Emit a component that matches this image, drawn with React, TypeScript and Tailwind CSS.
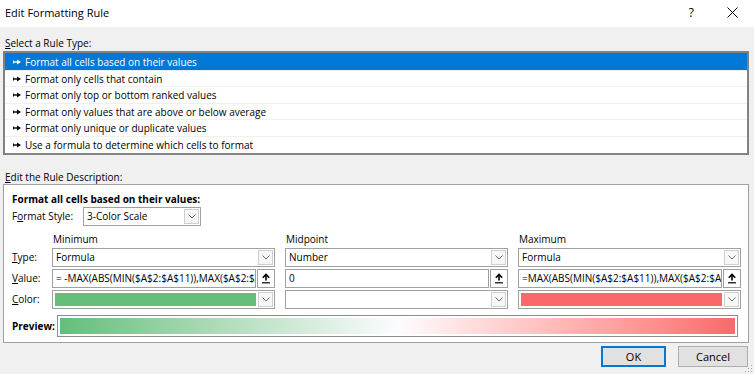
import React from "react";

const Chevron = () => (
  <div className="w-[15px] h-[15px] mr-[1px] border border-[#cfcfcf] bg-[#f7f7f7] flex items-center justify-center shrink-0">
    <svg width="8" height="5" viewBox="0 0 8 5">
      <polyline points="0.5,0.5 4,4 7.5,0.5" fill="none" stroke="#6d6d6d" strokeWidth="1" />
    </svg>
  </div>
);

const UpBtn = () => (
  <div className="w-[18px] h-[19px] border border-[#a0a0a0] bg-white flex items-center justify-center shrink-0">
    <svg width="10" height="11" viewBox="0 0 10 11">
      <path d="M5 1.5 V7.5" stroke="#000" strokeWidth="1.6" />
      <path d="M1.8 4.8 L5 1.5 L8.2 4.8" fill="none" stroke="#000" strokeWidth="1.6" />
      <path d="M1 9.8 H9" stroke="#000" strokeWidth="1.2" />
    </svg>
  </div>
);

const Combo = ({ text, fill }: { text?: string; fill?: string }) => (
  <div className="h-[19px] border border-[#a0a0a0] bg-white flex items-center">
    {fill ? (
      <div className="flex-1 h-[13px] mx-[2px]" style={{ backgroundColor: fill }} />
    ) : (
      <div className="flex-1 pl-[3px] leading-[17px] truncate">{text}</div>
    )}
    <Chevron />
  </div>
);

const ValueField = ({ text }: { text: string }) => (
  <div className="h-[19px] flex gap-[1px]">
    <div className="flex-1 min-w-0 border border-[#a0a0a0] bg-white pl-[3px] leading-[17px] whitespace-nowrap overflow-hidden">
      {text}
    </div>
    <UpBtn />
  </div>
);

const ListArrow = ({ white }: { white?: boolean }) => (
  <svg width="8" height="6" viewBox="0 0 8 6" className="shrink-0">
    <rect x="0" y="2.3" width="5" height="1.4" fill={white ? "#fff" : "#000"} />
    <rect x="0" y="1.5" width="1" height="3" fill={white ? "#fff" : "#000"} />
    <polygon points="4,0.5 8,3 4,5.5" fill={white ? "#fff" : "#000"} />
  </svg>
);

const rules = [
  { t: "Format all cells based on their values", h: "h-[17px]" },
  { t: "Format only cells that contain", h: "h-[16px]" },
  { t: "Format only top or bottom ranked values", h: "h-[17px]" },
  { t: "Format only values that are above or below average", h: "h-[16px]" },
  { t: "Format only unique or duplicate values", h: "h-[17px]" },
  { t: "Use a formula to determine which cells to format", h: "h-[17px]" },
];

export default function App() {
  return (
    <div className="relative w-[754px] h-[374px] bg-[#f0f0f0] text-black font-['Open_Sans','Segoe_UI',sans-serif] text-[10px] overflow-hidden">
      {/* Title bar */}
      <div className="h-[27px] bg-white flex items-center justify-between">
        <div className="pl-[5px] text-[11px] leading-[14px] pb-[2px]">Edit Formatting Rule</div>
        <div className="flex items-center pb-[2px]">
          <span className="text-[12px] leading-[14px] mr-[33px]">?</span>
          <svg width="11" height="11" viewBox="0 0 11 11" className="mr-[16px]">
            <path d="M0.5 0.5 L10.5 10.5 M10.5 0.5 L0.5 10.5" stroke="#000" strokeWidth="1" />
          </svg>
        </div>
      </div>

      <div className="pl-[3px] pr-[5px]">
        {/* Select a rule type */}
        <div className="h-[24px] pt-[9px] pl-[2px] leading-[14px]">
          <span className="underline">S</span>elect a Rule Type:
        </div>
        <div className="h-[104px] border-2 border-[#828282] bg-white flex flex-col">
          {rules.map((r, i) => (
            <div
              key={i}
              className={
                r.h +
                (i === 0
                  ? " bg-[#0078d7] text-white"
                  : " border-t border-[#f0f0f0]") +
                " flex items-center pl-[8px] gap-[4px] leading-[14px]"
              }
            >
              <ListArrow white={i === 0} />
              <span>{r.t}</span>
            </div>
          ))}
        </div>

        {/* Edit the rule description */}
        <div className="h-[29px] pt-[15px] pl-[2px] leading-[14px]">
          <span className="underline">E</span>dit the Rule Description:
        </div>
        <div className="h-[159px] border border-[#a0a0a0] bg-white pl-[8px] pr-[7px] pt-[7px]">
          <div className="font-bold leading-[14px]">Format all cells based on their values:</div>
          <div className="flex items-center mt-[1px] h-[19px]">
            <div className="w-[71px]">
              F<span className="underline">o</span>rmat Style:
            </div>
            <div className="w-[118px]">
              <Combo text="3-Color Scale" />
            </div>
          </div>

          {/* header */}
          <div className="flex mt-[6px] h-[15px] leading-[15px] gap-[10px]">
            <div className="w-[30px]" />
            <div className="w-[223px] pl-[1px]">Minimum</div>
            <div className="w-[223px] pl-[1px]">Midpoint</div>
            <div className="w-[223px] pl-[1px]">Maximum</div>
          </div>
          {/* type row */}
          <div className="flex mt-[1px] gap-[10px] items-center">
            <div className="w-[30px]">
              <span className="underline">T</span>ype:
            </div>
            <div className="w-[223px]"><Combo text="Formula" /></div>
            <div className="w-[223px]"><Combo text="Number" /></div>
            <div className="w-[223px]"><Combo text="Formula" /></div>
          </div>
          {/* value row */}
          <div className="flex mt-[2px] gap-[10px] items-center">
            <div className="w-[30px]">
              <span className="underline">V</span>alue:
            </div>
            <div className="w-[223px]"><ValueField text="= -MAX(ABS(MIN($A$2:$A$11)),MAX($A$2:$A$11))" /></div>
            <div className="w-[223px]"><ValueField text="0" /></div>
            <div className="w-[223px]"><ValueField text="=MAX(ABS(MIN($A$2:$A$11)),MAX($A$2:$A$11))" /></div>
          </div>
          {/* color row */}
          <div className="flex mt-[2px] gap-[10px] items-center">
            <div className="w-[30px]">
              <span className="underline">C</span>olor:
            </div>
            <div className="w-[223px]"><Combo fill="#63be7b" /></div>
            <div className="w-[223px]"><Combo text="" /></div>
            <div className="w-[223px]"><Combo fill="#f8696b" /></div>
          </div>

          {/* preview */}
          <div className="flex items-center mt-[6px]">
            <div className="w-[45px] font-bold">Preview:</div>
            <div className="w-[681px] h-[22px] border border-[#8c8c8c] bg-white p-[2px]">
              <div className="w-full h-full bg-linear-to-r from-[#63be7b] via-[#fcfcff] to-[#f8696b]" />
            </div>
          </div>
        </div>

        {/* buttons */}
        <div className="flex justify-end gap-[12px] mt-[3px] pr-[1px]">
          <button className="w-[65px] h-[21px] bg-[#e1e1e1] border-2 border-[#0078d7] text-[11px] leading-[15px]">
            OK
          </button>
          <button className="w-[70px] h-[21px] bg-[#e1e1e1] border border-[#adadad] text-[11px] leading-[17px]">
            Cancel
          </button>
        </div>
      </div>

      {/* resize grip */}
      <svg width="8" height="8" viewBox="0 0 8 8" className="absolute right-[1px] bottom-[1px]">
        <rect x="6" y="0" width="1" height="1" fill="#a0a0a0" />
        <rect x="3" y="3" width="1" height="1" fill="#a0a0a0" />
        <rect x="6" y="3" width="1" height="1" fill="#a0a0a0" />
        <rect x="0" y="6" width="1" height="1" fill="#a0a0a0" />
        <rect x="3" y="6" width="1" height="1" fill="#a0a0a0" />
        <rect x="6" y="6" width="1" height="1" fill="#a0a0a0" />
      </svg>
    </div>
  );
}
